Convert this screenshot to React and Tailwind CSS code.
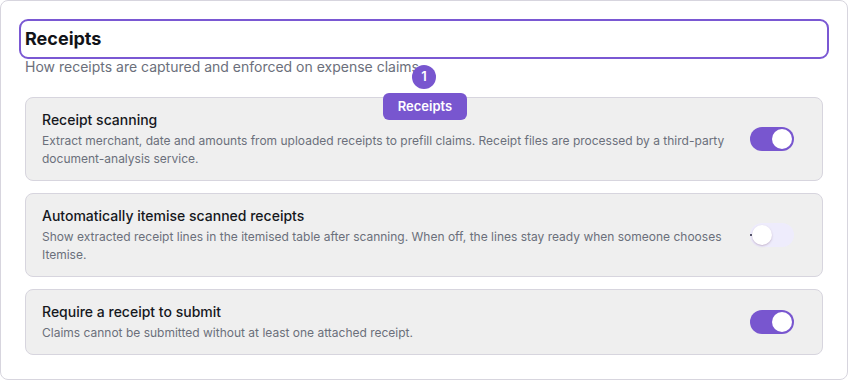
import React, { useState } from 'react';

const settings = [
  {
    id: 'scan',
    title: 'Receipt scanning',
    text: 'Extract merchant, date and amounts from uploaded receipts to prefill claims. Receipt files are processed by a third-party document-analysis service.',
    on: true,
  },
  {
    id: 'itemise',
    title: 'Automatically itemise scanned receipts',
    text: 'Show extracted receipt lines in the itemised table after scanning. When off, the lines stay ready when someone chooses Itemise.',
    on: false,
  },
  {
    id: 'require',
    title: 'Require a receipt to submit',
    text: 'Claims cannot be submitted without at least one attached receipt.',
    on: true,
  },
];

const Toggle = ({ on, onClick }) => (
  <button
    onClick={onClick}
    className={`relative flex h-6 w-11 shrink-0 items-center rounded-full p-0.5 ${
      on ? 'justify-end bg-[#7856cf]' : 'justify-start bg-[#eeecfc]'
    }`}
  >
    {!on && <span className="absolute left-0 top-[11px] h-[2px] w-[2px] bg-[#55556a]" />}
    <span
      className={`h-5 w-5 rounded-full bg-white ${
        on ? '' : 'shadow-[0_1px_2px_rgba(120,80,120,0.35)]'
      }`}
    />
  </button>
);

export default function App() {
  const [values, setValues] = useState(
    Object.fromEntries(settings.map((s) => [s.id, s.on]))
  );

  return (
    <div className="h-[380px] w-[848px] bg-white font-['Inter',sans-serif]">
      <div className="relative h-full rounded-lg border border-[#d7d5de] bg-white p-6">
        <h2 className="rounded-[3px] text-lg font-bold leading-7 text-[#111318] outline-2 outline-offset-4 outline-[#7a58d3]">
          Receipts
        </h2>
        <p className="mt-1 text-sm leading-5 text-[#6b6f7b]">
          How receipts are captured and enforced on expense claims
        </p>

        {/* tour marker */}
        <span className="absolute left-[411px] top-[64px] flex h-6 w-6 items-center justify-center rounded-full bg-[#7856cf] text-[13px] font-semibold text-white">
          1
        </span>
        <span className="absolute left-[382px] top-[92px] z-10 flex h-[27px] w-[84px] items-center justify-center rounded-md bg-[#7856cf] text-[13px] font-semibold text-white">
          Receipts
        </span>

        <div className="mt-5 flex flex-col gap-3">
          {settings.map((s) => (
            <div
              key={s.id}
              className="flex items-center gap-6 rounded-lg border border-[#d7d5de] bg-[#efefef] py-3 pl-4 pr-7"
            >
              <div className="flex-1">
                <div className="text-sm font-medium leading-5 text-[#16181d]">{s.title}</div>
                <div className="mt-0.5 text-xs leading-[18px] text-[#6b6f7b]">{s.text}</div>
              </div>
              <Toggle
                on={values[s.id]}
                onClick={() => setValues((v) => ({ ...v, [s.id]: !v[s.id] }))}
              />
            </div>
          ))}
        </div>
      </div>
    </div>
  );
}
